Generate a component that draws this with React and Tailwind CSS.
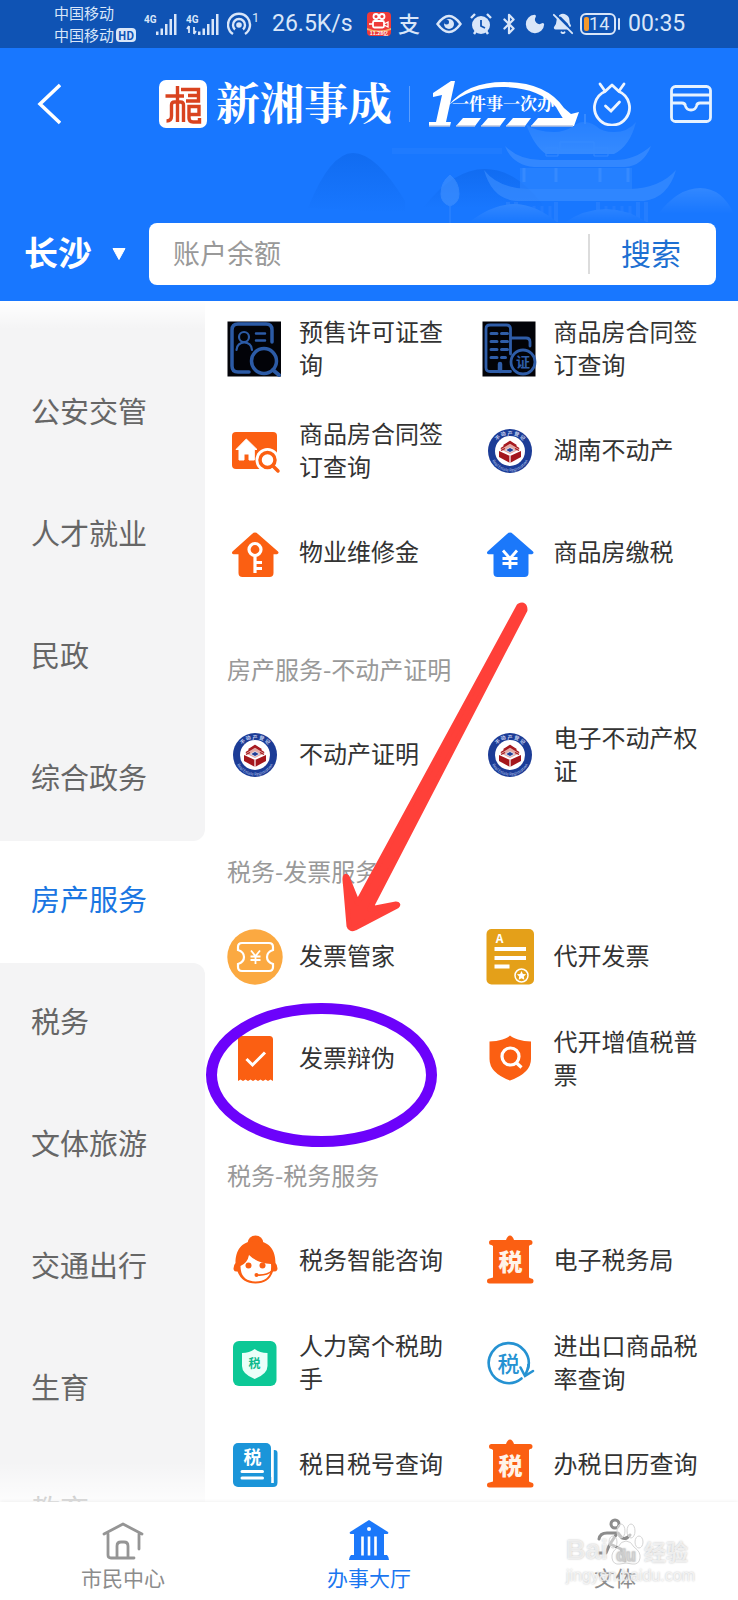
import React, { useState } from 'react';
import { Bluetooth, Moon, BellOff } from 'lucide-react';

const categories = ['公安交管', '人才就业', '民政', '综合政务', '房产服务', '税务', '文体旅游', '交通出行', '生育', '教育'];

function Icon({ children }) {
  return (
    <svg viewBox="0 0 56 56" className="size-14 shrink-0 overflow-visible" fill="none" aria-hidden="true">
      {children}
    </svg>
  );
}

function PermitIcon() {
  return (
    <Icon>
      <rect x="0.5" y="0.5" width="53.5" height="55" fill="#020308" />
      <g stroke="#2c5ba6" strokeWidth="3.5" strokeLinecap="round">
        <path d="M45 21V9q0-6-6-6H11Q5 3 5 9v36q0 6 6 6h11" />
        <circle cx="37" cy="40" r="12.5" />
        <path d="M46 49l6 5" strokeWidth="4" />
        <path d="M29 12.5h9M29 19.5h9" strokeWidth="2.5" />
        <circle cx="17" cy="16" r="5" strokeWidth="2.2" />
        <path d="M9.5 29c0-10 15.5-10 15.5 0" strokeWidth="2.2" />
      </g>
    </Icon>
  );
}

function BuildingIcon() {
  return (
    <Icon>
      <rect x="0.5" y="0.5" width="53" height="55" fill="#020308" />
      <g stroke="#2f5da8" strokeWidth="2.8" strokeLinecap="round">
        <path d="M28.5 50.5H8q-4 0-4-4V8q0-4 4-4h16.5q4 0 4 4v25" />
        <path d="M29 17h15q4 0 4 4v4" />
        <path d="M9 12.5h6M19.5 12.5h6M9 20.5h6M19.5 20.5h6M9 28.5h6M19.5 28.5h6M9 36.5h6M19.5 36.5h4" strokeWidth="3" />
        <path d="M18 43v7" strokeWidth="4.5" />
        <circle cx="41" cy="41" r="12" />
      </g>
      <text x="41" y="46" textAnchor="middle" fontSize="14" fontWeight="700" fill="#2f5da8">证</text>
    </Icon>
  );
}

function HouseSearchIcon() {
  return (
    <Icon>
      <rect x="5" y="9" width="45" height="37" rx="4" fill="#fb5f12" />
      <path d="M19.3 16L30 26.5h-2.7V37H22v-6h-5v6h-5V26.5H9z" fill="#fff" stroke="#fff" strokeLinejoin="round" />
      <circle cx="40.5" cy="37" r="12" fill="#fff" />
      <circle cx="40.5" cy="37" r="7.5" stroke="#fb5f12" strokeWidth="3.5" />
      <path d="M46 43l5 5" stroke="#fb5f12" strokeWidth="3.5" strokeLinecap="round" />
    </Icon>
  );
}

function EmblemIcon({ id }) {
  return (
    <Icon>
      <defs>
        <path id={`${id}-top`} d="M11.5 28a16.5 16.5 0 0 1 33 0" />
        <path id={`${id}-bottom`} d="M7.5 28a20.5 20.5 0 0 0 41 0" />
      </defs>
      <circle cx="28" cy="28" r="22" fill="#1c3c96" />
      <circle cx="28" cy="28" r="15" fill="#fff" />
      <text fontSize="5" fontWeight="700" fill="#cdd7f2">
        <textPath href={`#${id}-top`} startOffset="50%" textAnchor="middle">不 动 产 登 记</textPath>
      </text>
      <text fontSize="4" fill="#b4c2ea">
        <textPath href={`#${id}-bottom`} startOffset="50%" textAnchor="middle">Real Estate Registration</textPath>
      </text>
      <path d="M17 28l11 5 11-5v6l-11 6-11-6z" fill="#a4161c" />
      <path d="M28 33v7" stroke="#fff" strokeWidth="1.2" />
      <path d="M18 26l10-8.500 10 8.500-10 5z" fill="#e3a9a5" />
      <path d="M19 25.500l9-5.500 9 5.500M21.500 22.500l6.500-4 6.500 4M19 27.500l4-2M37 27.500l-4-2" stroke="#a4161c" strokeWidth="1.2" />
      <path d="M23.5 27l4.5-2.5 4.5 2.5-4.5 2.5z" fill="#223f97" stroke="#fff" strokeWidth="0.7" />
    </Icon>
  );
}

function House({ color, children }) {
  return (
    <Icon>
      <path
        d="M28 7.500q1.500 0 3 1.400L51 26.500q1.500 2-1 2.700h-3.500V48q0 4-4 4h-27q-4 0-4-4V29.200H6.5Q4 29 5.500 26.500L25 8.900Q26.500 7.500 28 7.500z"
        fill={color}
      />
      {children}
    </Icon>
  );
}

function HouseKeyIcon() {
  return (
    <House color="#fb5f12">
      <g stroke="#fff" strokeWidth="3.2">
        <circle cx="28" cy="24.5" r="6" />
        <path d="M28 31v17M28 37.5h7M28 43.5h7" />
      </g>
    </House>
  );
}

function HouseYuanIcon() {
  return (
    <House color="#1b78fa">
      <path d="M21 25.5l7 8 7-8M28 33.5V44M20.5 33.5h15M20.5 38.5h15" stroke="#fff" strokeWidth="2.8" />
    </House>
  );
}

function TicketIcon() {
  return (
    <Icon>
      <circle cx="28" cy="28" r="27.7" fill="#fba941" />
      <path
        d="M15 14h27q4 0 4 4v3q-6 2-6 7t6 7v3q0 4-4 4H15q-4 0-4-4v-3q6-2 6-7t-6-7v-3q0-4 4-4z"
        stroke="#fff"
        strokeWidth="2.2"
      />
      <path d="M24 21.5l4.5 5.500 4.500-5.500M28.500 27v8M23.500 27.500h10M23.500 31h10" stroke="#fff" strokeWidth="1.8" />
    </Icon>
  );
}

function NoteIcon() {
  return (
    <Icon>
      <rect x="4.5" y="0" width="47.5" height="55.5" rx="5" fill="#e4a019" />
      <text x="17.5" y="14" textAnchor="middle" fontSize="12" fontWeight="700" fill="#fff">A</text>
      <path d="M12.5 20H44M12.5 29H44M12.5 37.5h15" stroke="#fff" strokeWidth="3.8" />
      <circle cx="39.5" cy="46.5" r="6.5" stroke="#fff" strokeWidth="1.5" />
      <path d="M39.5 42l1.4 2.9 3.2.4-2.3 2.2.5 3.2-2.8-1.500-2.800 1.500.5-3.200-2.300-2.200 3.200-.4z" fill="#fff" />
    </Icon>
  );
}

function ReceiptIcon() {
  return (
    <Icon>
      <path
        d="M11 5h31.5Q46 5 46 8.5V50l-2.500-1.500-2.500 1.500-2.500-1.500-2.500 1.500-2.500-1.500-2.500 1.500-2.500-1.500-2.500 1.500-2.500-1.500-2.500 1.500-2.500-1.500-2.500 1.500-2.500-1.500-2.500 1.500z"
        fill="#fb5f12"
      />
      <path d="M19.5 28l6 6L38 21.500" stroke="#fff" strokeWidth="3" />
    </Icon>
  );
}

function ShieldSearchIcon() {
  return (
    <Icon>
      <path d="M28 4.500q2 2 8 4t13 2V28q0 14-21 21.500Q7.500 42 7.500 28V10.500q7 0 13-2t7.500-4z" fill="#fb5f12" />
      <circle cx="28.5" cy="25.5" r="8.5" stroke="#fff" strokeWidth="3.2" />
      <path d="M34 31.500l5.500 5" stroke="#fff" strokeWidth="3.2" />
    </Icon>
  );
}

function AssistantIcon() {
  return (
    <Icon>
      <circle cx="28.5" cy="10.5" r="8" fill="#fb5f12" />
      <path
        d="M28.5 8C14 8 8.500 18 8.500 30q-2 2-2 5.500t4 3Q15 50.500 28.500 50.500T46 38.500q4.500.5 4.500-3t-2-5.500C48.500 18 43 8 28.500 8z"
        fill="#fb5f12"
      />
      <path d="M22 22q8 8 22 9 1.500 17-15.500 17.500Q13.500 48 13.500 33q7-3 8.500-11z" fill="#fff" />
      <circle cx="21.5" cy="32.5" r="3" fill="#fb5f12" />
      <circle cx="35.5" cy="32.5" r="3" fill="#fb5f12" />
      <circle cx="29.5" cy="42" r="2" fill="#fb5f12" />
      <path d="M29.5 42q10 1 16-4.500" stroke="#fb5f12" strokeWidth="1.6" />
    </Icon>
  );
}

function GreenShieldIcon() {
  return (
    <Icon>
      <rect x="6" y="6" width="43.5" height="45" rx="6" fill="#0cc896" />
      <path d="M27.700 14q5 4 12.800 4v13q0 8-12.800 13Q15 39 15 31V18q7.500 0 12.700-4z" fill="#eafff9" />
      <text x="27.5" y="33" textAnchor="middle" fontSize="12" fontWeight="700" fill="#0cb98b">税</text>
    </Icon>
  );
}

function TaxBookIcon() {
  return (
    <Icon>
      <path d="M46 13h1.500q3 0 3 3v29.500q0 4.500-4.500 4.500H20V40h26z" fill="#1b95d9" />
      <rect x="6" y="6" width="38" height="44" rx="5" fill="#1b95d9" />
      <path d="M45.5 12v34" stroke="#fff" strokeWidth="2.6" />
      <text x="25.5" y="26.5" textAnchor="middle" fontSize="18" fontWeight="700" fill="#fff">税</text>
      <path d="M15 34.5h20.500M15 41h20.500" stroke="#fff" strokeWidth="3" strokeLinecap="round" />
    </Icon>
  );
}

function TaxBureauIcon() {
  return (
    <Icon>
      <path
        d="M28 2.500q2.500 0 4 4.500H48q2.500 0 2.500 2.500T48 12l-1 1v31.500l2 1q2.500 0 2.500 2.500T49 50.500H7.500Q5 50.500 5 48t2.500-2.500l3.500-1V13l-1.500-1Q7 12 7 9.500T9.500 7H24q1.500-4.500 4-4.500z"
        fill="#fb5f12"
      />
      <text x="28.5" y="38" textAnchor="middle" fontSize="24" fontWeight="900" fill="#fff3e8">税</text>
    </Icon>
  );
}

function TaxRateIcon() {
  return (
    <Icon>
      <path d="M39.5 43.500A20 20 0 1 1 45 38" stroke="none" />
      <path d="M39.5 43.500a20 20 0 1 1 6.500-10" stroke="#2592d2" strokeWidth="2.6" strokeLinecap="round" />
      <path d="M38.500 32.500l4.500 8.500 8-5" stroke="#2592d2" strokeWidth="2.6" strokeLinecap="round" />
      <path d="M46.500 29q0 5-3.500 11" stroke="#2592d2" strokeWidth="2.6" />
      <text x="26.5" y="36.5" textAnchor="middle" fontSize="22" fontWeight="500" fill="#2592d2">税</text>
    </Icon>
  );
}

const groups = [
  {
    items: [
      { label: '预售许可证查询', icon: <PermitIcon /> },
      { label: '商品房合同签订查询', icon: <BuildingIcon /> },
      { label: '商品房合同签订查询', icon: <HouseSearchIcon /> },
      { label: '湖南不动产', icon: <EmblemIcon id="hn" /> },
      { label: '物业维修金', icon: <HouseKeyIcon /> },
      { label: '商品房缴税', icon: <HouseYuanIcon /> },
    ],
  },
  {
    title: '房产服务-不动产证明',
    items: [
      { label: '不动产证明', icon: <EmblemIcon id="zm" /> },
      { label: '电子不动产权证', icon: <EmblemIcon id="qz" /> },
    ],
  },
  {
    title: '税务-发票服务',
    items: [
      { label: '发票管家', icon: <TicketIcon /> },
      { label: '代开发票', icon: <NoteIcon /> },
      { label: '发票辩伪', icon: <ReceiptIcon /> },
      { label: '代开增值税普票', icon: <ShieldSearchIcon /> },
    ],
  },
  {
    title: '税务-税务服务',
    items: [
      { label: '税务智能咨询', icon: <AssistantIcon /> },
      { label: '电子税务局', icon: <TaxBureauIcon /> },
      { label: '人力窝个税助手', icon: <GreenShieldIcon /> },
      { label: '进出口商品税率查询', icon: <TaxRateIcon /> },
      { label: '税目税号查询', icon: <TaxBookIcon /> },
      { label: '办税日历查询', icon: <TaxBureauIcon /> },
    ],
  },
];

function Signal({ data }) {
  return (
    <svg viewBox="0 0 34 24" className="h-6 w-[34px]" fill="#d9e6f9" aria-hidden="true">
      <text x="0" y="11" fontSize="10" fontWeight="700" fontFamily="Roboto, sans-serif">4G</text>
      {data && <path d="M3 14v7M3 14l-2 3M8 22v-7M8 22l2-3" stroke="#d9e6f9" strokeWidth="1.8" />}
      <path d="M12 19.500h2.500v3.500H12zM16.500 16.500H19V23h-2.500zM21 12h2.500v11H21zM25.500 7H28v16h-2.500zM30 2h2.500v21H30z" />
    </svg>
  );
}

function StatusBar() {
  return (
    <div className="flex h-12 items-center bg-[#0f53b4] pl-[54px] text-[#d9e6f9]">
      <div className="w-[82px] text-[15px] leading-[22px] whitespace-nowrap">
        <div>中国移动</div>
        <div className="flex items-center gap-0.5">
          中国移动
          <span className="rounded-sm bg-[#d9e6f9] px-0.5 text-[11px] leading-[14px] font-bold text-[#0f53b4]">HD</span>
        </div>
      </div>
      <div className="ml-2 flex gap-2">
        <Signal />
        <Signal data />
      </div>
      <svg viewBox="0 0 32 26" className="ml-[7px] h-[26px] w-8" fill="none" stroke="#d9e6f9" strokeWidth="2.4" aria-hidden="true">
        <circle cx="12" cy="14" r="2.8" fill="#d9e6f9" stroke="none" />
        <path d="M8 18.500a6 6 0 1 1 8 0" />
        <path d="M6 23a11 11 0 1 1 12 0" />
        <text x="25" y="11" fontSize="13" fill="#d9e6f9" stroke="none" fontFamily="Roboto, sans-serif">1</text>
      </svg>
      <span className="ml-[13px] w-[83px] font-[Roboto,sans-serif] text-[23px]">26.5K/s</span>
      <svg viewBox="0 0 24 24" className="ml-3 size-6" fill="none" stroke="#fff" strokeWidth="1.8" aria-hidden="true">
        <rect width="24" height="24" rx="4" fill="#ee3a39" stroke="none" />
        <circle cx="9" cy="4.500" r="2.500" />
        <circle cx="15" cy="4.500" r="2.500" />
        <rect x="6" y="9" width="11" height="6.500" rx="1.500" />
        <path d="M17 12l4-2v5l-4-2M6 12H2" strokeWidth="1.3" />
        <path d="M0 16q12 5 24 0v2q-12 4-24 0z" fill="#f6b26b" stroke="none" />
        <text x="12" y="23" textAnchor="middle" fontSize="5" fontWeight="700" fill="#fff" stroke="none">11.28亿</text>
      </svg>
      <span className="ml-[7px] pb-1 text-[22px] leading-none font-medium">支</span>
      <svg viewBox="0 0 26 20" className="ml-4 h-5 w-[26px]" fill="none" stroke="#d9e6f9" strokeWidth="2.4" aria-hidden="true">
        <path d="M1.500 10Q13-6 24.500 10 13 26 1.500 10z" />
        <circle cx="13" cy="10" r="5" fill="#d9e6f9" stroke="none" />
        <circle cx="10.500" cy="8" r="2.500" fill="#0f53b4" stroke="none" />
      </svg>
      <svg viewBox="0 0 22 22" className="ml-2 size-[22px]" fill="none" stroke="#d9e6f9" strokeWidth="2.4" aria-hidden="true">
        <circle cx="11" cy="12" r="9" fill="#d9e6f9" stroke="none" />
        <path d="M1 5l4-4M21 5l-4-4M4 21l2-3M18 21l-2-3" />
        <path d="M11 7v6l4 2" stroke="#0f53b4" strokeWidth="1.8" />
      </svg>
      <Bluetooth className="ml-1.5 size-[22px]" strokeWidth={2.4} />
      <Moon className="ml-1 size-[22px]" fill="currentColor" />
      <BellOff className="ml-1.5 size-[22px]" fill="currentColor" />
      <div className="ml-1.5 flex items-center gap-0.5">
        <div className="flex h-[22px] w-9 items-center rounded-md border-2 border-[#d9e6f9] pl-0.5">
          <span className="h-3.5 w-[5px] rounded-xs bg-[#f6992b]" />
          <span className="font-[Roboto,sans-serif] text-[18px] leading-none">14</span>
        </div>
        <span className="h-3 w-0.5 rounded-xs bg-[#d9e6f9]" />
      </div>
      <span className="ml-2 font-[Roboto,sans-serif] text-[23px]">00:35</span>
    </div>
  );
}

function HeaderArt() {
  return (
    <svg viewBox="0 0 450 180" className="absolute top-12 right-0 h-[180px] w-[450px]" fill="none" aria-hidden="true">
      <defs>
        <linearGradient id="hill" x1="0" y1="0" x2="0" y2="1">
          <stop offset="0" stopColor="#116cf1" />
          <stop offset="1" stopColor="#1877ff" />
        </linearGradient>
        <linearGradient id="roof" x1="0" y1="0" x2="0" y2="1">
          <stop offset="0" stopColor="#4a98ff" stopOpacity="0.5" />
          <stop offset="1" stopColor="#4a98ff" />
        </linearGradient>
        <linearGradient id="mist" x1="0" y1="0" x2="0" y2="1">
          <stop offset="0" stopColor="#4493ff" />
          <stop offset="1" stopColor="#1877ff" />
        </linearGradient>
      </defs>
      <path d="M20 160Q42 105 65 105t52 48v12z" fill="url(#hill)" />
      <path d="M135 160q30-39 62-39t60 39z" fill="url(#hill)" />
      <path d="M104 100h110v6H104z" fill="#1f7bff" />
      <g opacity="0.6">
        <path d="M238 76q10 8 28 8 10 0 20-6 4-4 10-4t12 4q6 6 18 6 14 0 22-10-6 24-22 32h-68q-12-8-20-30z" fill="url(#roof)" />
        <path d="M297 66v10" stroke="#4a98ff" strokeWidth="2" />
        <path d="M272 94h34v8h-34zM258 100h12v8h-12zM306 100h14v8h-14z" stroke="#4a98ff" />
        <path d="M217 98q14 14 36 14h74q20 0 36-14-8 20-26 21H246q-22-2-29-21z" fill="#4493ff" />
        <path d="M232 120h112v22H232z" fill="#2f86ff" />
        <path d="M236 120v14M268 120v14M312 120v14M340 120v14" stroke="#4a98ff" strokeWidth="3" />
        <path d="M196 122q14 18 44 19h102q30-1 46-19-8 28-32 31H228q-24-2-32-31z" fill="#3f90ff" />
        <path d="M220 154v20M228 154v20M268 154v20M310 154v20M350 154v20M358 154v20" stroke="#2f84ff" strokeWidth="4" />
        <path d="M238 158v16M246 158v16M254 158v16M262 158v16M318 158v16M326 158v16M334 158v16M342 158v16" stroke="#2a80ff" strokeWidth="3" />
        <path d="M162 158q-9-3-9-12 0-12 9-19 9 7 9 19 0 9-9 12zM162 158v17" fill="#4493ff" stroke="#4493ff" />
        <path d="M370 166q20-26 42-26t34 26z" fill="url(#mist)" />
        <path d="M180 175q24-19 46-19t44 19zM276 175q20-14 42-14t42 14z" fill="url(#mist)" />
      </g>
    </svg>
  );
}

function Banner() {
  return (
    <div className="relative ml-[19px] h-[46px] w-[150px]">
      <svg viewBox="0 0 150 46" className="absolute inset-0 h-full w-full" aria-hidden="true">
        <path d="M22 0L4 12v4l9-2L7 41H0l-1 4h22l1-4h-5L26 0z" fill="#fff" />
        <path d="M20 24Q38 1 75 1q42 0 60 26l7 6 8-2-5 14h-20q10-3 10-6-4-6-8-13Q110 7 76 6 42 5 20 24z" fill="#fff" />
        <path d="M34 37h18l-6 8H27zM59 37h18l-6 8H52zM84 37h18l-6 8H77zM109 37h30l-4 8h-33z" fill="#fff" />
        <path d="M27 45h19M52 45h19M77 45h19M102 45h42M0 45h21" stroke="#b9c4dd" strokeWidth="1.5" />
      </svg>
      <span className="absolute top-[11px] left-[23px] text-[17px] leading-[22px] font-bold whitespace-nowrap font-['Noto_Serif_CJK_SC','Noto_Sans_CJK_SC',serif]">
        一件事一次办
      </span>
    </div>
  );
}

function Header() {
  return (
    <header className="relative shrink-0 bg-[#1877ff] pb-4 text-white">
      <HeaderArt />
      <div className="relative">
        <StatusBar />
        <div className="flex h-28 items-center pr-[26px] pl-[37px]">
          <button type="button" aria-label="返回">
            <svg viewBox="0 0 24 42" className="h-[42px] w-6" fill="none" stroke="#fff" strokeWidth="3.5" aria-hidden="true">
              <path d="M23 2L3 21l20 19" />
            </svg>
          </button>
          <svg viewBox="0 0 48 48" className="ml-auto size-12" fill="none" stroke="#d9431f" strokeWidth="3.4" aria-hidden="true">
            <rect width="48" height="48" rx="7" fill="#fff" stroke="none" />
            <path d="M6.500 16H25M18.500 6v36M18.500 22h-3q-3 0-3 3v11q0 5-5 5M18.500 22h3q3 0 3 3v17" />
            <path d="M22 9.500h17.500V21H27M29 15.500h10M30 26.500h10v8H30zM30 26v12q0 4 4 4h6.500v-4" />
          </svg>
          <h1 className="ml-[9px] pb-1.5 text-[44px] leading-[48px] font-bold font-['Noto_Serif_CJK_SC','Noto_Sans_CJK_SC',serif]">新湘事成</h1>
          <span className="ml-[17px] h-9 w-px bg-[#5c9fff]" />
          <Banner />
          <button type="button" aria-label="待办" className="ml-3.5">
            <svg viewBox="0 0 38 44" className="h-11 w-[38px]" fill="none" stroke="#eef5ff" strokeWidth="2.8" strokeLinecap="round" aria-hidden="true">
              <path d="M19 3l-7 6.500a17.500 17.500 0 1 0 14 0z" strokeLinejoin="round" />
              <path d="M7 2l5 7M31 2l-5 7M12.500 24l5.500 5 8.500-9" />
            </svg>
          </button>
          <button type="button" aria-label="消息" className="ml-[39px]">
            <svg viewBox="0 0 42 38" className="h-[38px] w-[42px]" fill="none" stroke="#e6f2ff" strokeWidth="2.8" aria-hidden="true">
              <rect x="1.500" y="1.500" width="39" height="35" rx="4" />
              <path d="M2 10h38M2 18h10q3 0 3.500 3 1 4 5.500 4t5.500-4q.5-3 3.500-3h10" />
            </svg>
          </button>
        </div>
        <form className="mt-[63px] flex h-[62px] items-center pr-[22px] pl-6" onSubmit={(e) => e.preventDefault()}>
          <label htmlFor="city" className="sr-only">城市</label>
          <select id="city" className="h-14 w-[72px] shrink-0 appearance-none pb-1 text-[34px] leading-[52px] font-bold">
            <option>长沙</option>
          </select>
          <svg viewBox="0 0 14 12" className="ml-4 h-3 w-3.5 shrink-0" aria-hidden="true">
            <path d="M1 0.500h12L7 11.500z" fill="#fff" stroke="#fff" strokeLinejoin="round" />
          </svg>
          <div className="ml-[23px] flex h-full flex-1 items-center rounded-lg bg-white">
            <label htmlFor="keyword" className="sr-only">搜索</label>
            <input
              id="keyword"
              type="text"
              placeholder="账户余额"
              className="h-full min-w-0 flex-1 pb-1 pl-6 text-[27px] text-[#333] outline-none placeholder:text-[#999]"
            />
            <button type="submit" className="h-10 w-32 border-l-2 border-[#dcdcdc] pr-1 pb-1 text-center text-[30px] leading-9 text-[#1d70d2]">
              搜索
            </button>
          </div>
        </form>
      </div>
    </header>
  );
}

function Sidebar({ active, onSelect }) {
  const activeIndex = categories.indexOf(active);
  return (
    <nav className="relative w-[205px] shrink-0 overflow-hidden">
      <div className="h-[52px] bg-[#f4f4f5]" />
      {categories.map((name, index) => (
        <button
          key={name}
          type="button"
          onClick={() => onSelect(name)}
          className={`block h-[122px] w-full pb-1.5 pl-[31px] text-left text-[29px] ${
            index === activeIndex ? 'bg-white text-[#1a76e2]' : 'bg-[#f4f4f5] text-[#666]'
          } ${index === activeIndex - 1 ? 'rounded-br-xl' : ''} ${index === activeIndex + 1 ? 'rounded-tr-xl' : ''}`}
        >
          {name}
        </button>
      ))}
      <div className="absolute inset-x-0 top-0 h-7 bg-linear-to-b from-white to-transparent" />
      <div className="absolute inset-x-0 bottom-0 h-10 bg-linear-to-t from-white/80 to-transparent" />
    </nav>
  );
}

function ServiceGroup({ title, items }) {
  return (
    <section>
      {title && <h2 className="pt-[51px] pb-[21px] text-2xl leading-[34px] text-[#999]">{title}</h2>}
      <div className="grid grid-cols-2 gap-y-1.5">
        {items.map((item, index) => (
          <a key={index} href="#" className="flex h-24 items-center gap-4">
            {item.icon}
            <span className="max-w-[150px] pb-[5px] text-2xl leading-[33px] text-[#333]">{item.label}</span>
          </a>
        ))}
      </div>
    </section>
  );
}

function Annotations() {
  return (
    <svg className="pointer-events-none absolute top-0 left-0 h-[900px] w-[738px]" fill="none" aria-hidden="true">
      <path
        d="M519 305L357.500 602 347 576q-2-2-2 2l4 47q1 4 6 2l42-22q2-2-1-2l-26 5L525 309q0-7-6-4z"
        fill="#ff4039"
        stroke="#ff4039"
        strokeWidth="5"
        strokeLinejoin="round"
      />
      <ellipse cx="321.500" cy="774" rx="110" ry="66.500" stroke="#6c02fb" strokeWidth="11" />
    </svg>
  );
}

function Watermark() {
  return (
    <div className="pointer-events-none absolute right-10 bottom-3.5 w-[132px] text-white/70">
      <div className="flex items-end [text-shadow:0_0_2px_#bbb]">
        <span className="font-['Liberation_Sans',sans-serif] text-[27px] leading-8 font-bold">Bai</span>
        <svg viewBox="0 0 36 44" className="-mb-px h-11 w-9" fill="#fff" fillOpacity="0.5" stroke="#d4d4d4" aria-hidden="true">
          <ellipse cx="5" cy="19" rx="4" ry="6" />
          <ellipse cx="13" cy="8" rx="4" ry="7" />
          <ellipse cx="23" cy="8" rx="4" ry="7" />
          <ellipse cx="31" cy="19" rx="4" ry="6" />
          <path d="M18 18q5 0 8 6 7 5 6 11-1 7-8 6-6-2-12 0-7 1-8-6-1-6 6-11 3-6 8-6z" />
          <text x="18" y="38" textAnchor="middle" fontSize="16" fontWeight="700" stroke="#ccc" fontFamily="Liberation Sans, sans-serif">du</text>
        </svg>
        <span className="text-[22px] leading-8 font-bold">经验</span>
      </div>
      <div className="font-['Liberation_Sans',sans-serif] text-[16px] leading-5 [text-shadow:0_0_2px_#bbb]">jingyan.baidu.com</div>
    </div>
  );
}

function TabBar() {
  return (
    <nav className="relative grid h-[98px] shrink-0 grid-cols-3 bg-white text-[21px] leading-[30px] text-[#8c8c8c] shadow-[0_0_4px_#00000014]">
      <a href="#" className="flex flex-col items-center pt-[18px]">
        <svg viewBox="0 0 42 42" className="size-[42px]" fill="none" stroke="#959595" strokeWidth="2.8" strokeLinecap="round" strokeLinejoin="round" aria-hidden="true">
          <path d="M2 14L21 4l19 10M6 14v21q0 3 3 3h23M37 14v15M15 37V26q0-4 4-4h3q4 0 4 4v11" />
        </svg>
        市民中心
      </a>
      <a href="#" aria-current="page" className="flex flex-col items-center pt-[18px] text-[#1a76f0]">
        <svg viewBox="0 0 42 42" className="size-[42px]" fill="#1b78fa" aria-hidden="true">
          <path d="M21 0l19 12q1 2-1 2H3q-2 0-1-2z" />
          <path d="M6 13h30v22h3q2 2 2 5H1q0-3 2-5h3z" />
          <path d="M14.500 16.500v19M21 16.500v19M27.500 16.500v19" stroke="#fff" strokeWidth="2.6" />
          <circle cx="21" cy="9" r="2" fill="#fff" />
        </svg>
        办事大厅
      </a>
      <a href="#" className="flex flex-col items-center pt-[18px]">
        <svg viewBox="0 0 42 42" className="size-[42px] overflow-visible" fill="none" stroke="#8c8c8c" strokeWidth="3" strokeLinecap="round" strokeLinejoin="round" aria-hidden="true">
          <circle cx="21" cy="4" r="4" />
          <path d="M5 19q1-6 8-6h11l4 5q4 2 8-3M22 15l-6 9 11 5 4 12M15 26l-3 7H4" />
        </svg>
        文体
      </a>
      <Watermark />
    </nav>
  );
}

export default function App() {
  const [active, setActive] = useState('房产服务');

  return (
    <div className="flex h-screen flex-col overflow-hidden bg-white font-['Noto_Sans_CJK_SC',sans-serif]">
      <Header />
      <main className="relative flex min-h-0 flex-1 overflow-hidden">
        <Sidebar active={active} onSelect={setActive} />
        <div className="flex-1 pr-0.5 pl-[22px]">
          {groups.map((group, index) => (
            <ServiceGroup key={index} title={group.title} items={group.items} />
          ))}
        </div>
        <Annotations />
      </main>
      <TabBar />
    </div>
  );
}
